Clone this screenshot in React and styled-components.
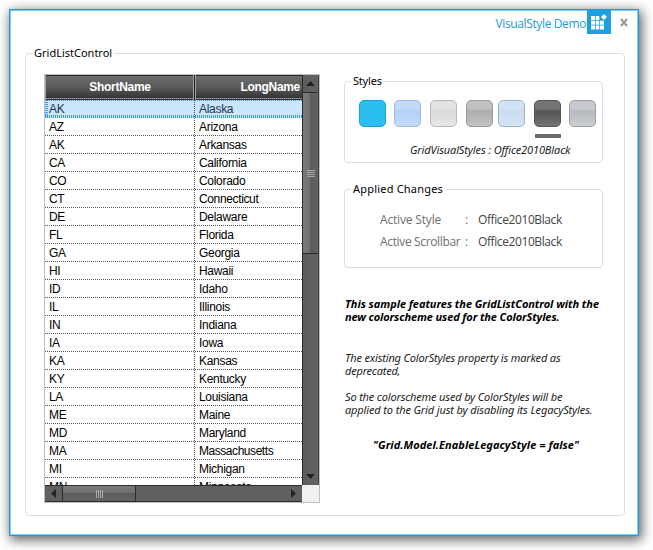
import React from "react";
import styled, { createGlobalStyle, css } from "styled-components";

const Global = createGlobalStyle`
  * { box-sizing: border-box; }
  body { margin: 0; background: #fff; overflow: hidden; }
`;

const ui = '"Noto Sans", "Open Sans", sans-serif';
const grid = '"Liberation Sans", Arial, sans-serif';

const Desktop = styled.div`
  width: 653px;
  height: 550px;
  padding: 9px 14px 14px 9px;
  background: #fff;
  font-family: ${ui};
  font-size: 11px;
  color: #000;
  overflow: hidden;
`;

const Window = styled.div`
  width: 630px;
  height: 527px;
  background: #fff;
  border: 1px solid #1e9bd7;
  box-shadow: inset 0 0 0 1px #86cdf0, 2px 3px 11px 1px rgba(0, 0, 0, 0.62);
  display: flex;
  flex-direction: column;
`;

const TitleBar = styled.header`
  height: 36px;
  display: flex;
  justify-content: flex-end;
  align-items: flex-start;
  padding-right: 10px;
`;

const Title = styled.span`
  font-family: "Open Sans", sans-serif;
  font-size: 12px;
  line-height: 16px;
  margin: 6px 1px 0 0;
  color: #1e9bd7;
  white-space: nowrap;
  letter-spacing: -0.38px;
`;

const AppIcon = styled.svg`
  width: 24px;
  height: 24px;
  display: block;
`;

const CloseButton = styled.button`
  border: 0;
  padding: 0;
  margin: 8px 0 0 9px;
  background: none;
  width: 8px;
  height: 9px;
  svg { display: block; }
`;

const Group = styled.fieldset`
  margin: 0;
  min-width: 0;
  padding: 0;
  border: 1px solid #d5dfe5;
  border-radius: 4px;
  width: ${(p) => p.$w}px;
  height: ${(p) => p.$h}px;
`;

const Legend = styled.legend`
  margin-left: 6px;
  padding: 0 2px;
  height: 14px;
  line-height: 14px;
  white-space: nowrap;
  letter-spacing: ${(p) => p.$ls || 0}px;
`;

const MainGroup = styled(Group)`
  margin: 0 0 0 15px;
`;

const Columns = styled.div`
  display: flex;
  padding: 14px 0 0 18px;
  gap: 24px;
`;

const GridFrame = styled.div`
  width: 276px;
  height: 429px;
  border: 1px solid #bfbfbf;
  display: grid;
  grid-template-columns: 257px 17px;
  grid-template-rows: 410px 17px;
  font-family: ${grid};
  font-size: 12px;
`;

const GridView = styled.div`
  overflow: hidden;
`;

const HeaderRow = styled.div`
  display: grid;
  grid-template-columns: 150px 107px;
  height: 25px;
  background: linear-gradient(#262626 0 1px, #6b6b6b 1px, #5a5a5a 50%, #343434 23px, #8a8a8a 23px 24px, #303030 24px);
  color: #fff;
  font-weight: bold;
  line-height: 23px;
  letter-spacing: -0.3px;
`;

const HeaderCell = styled.div`
  text-align: ${(p) => (p.$end ? "right" : "center")};
  padding: 1px ${(p) => (p.$end ? 2 : 0)}px 0 0;
  border-left: 1px solid #a0a0a0;
  border-right: ${(p) => (p.$end ? "0" : "1px solid #1e1e1e")};
  box-shadow: ${(p) => (p.$end ? "none" : "inset -1px 0 #a0a0a0")};
`;

const dots = (c) => css`
  background-image: repeating-linear-gradient(90deg, ${c} 0 1px, transparent 1px 2px);
  background-size: 100% 1px;
  background-position: 0 100%;
  background-repeat: no-repeat;
`;

const Row = styled.div`
  height: 18px;
  display: grid;
  grid-template-columns: 150px 107px;
  line-height: 19px;
  ${dots("#555")}
  ${(p) =>
    p.$selected &&
    css`
      color: #1b3550;
      background-color: #cbe5fd;
      background-image: repeating-linear-gradient(90deg, #3d9bf2 0 1px, transparent 1px 2px),
        repeating-linear-gradient(90deg, #3d9bf2 0 1px, transparent 1px 2px),
        repeating-linear-gradient(#3d9bf2 0 1px, transparent 1px 2px);
      background-size: 100% 1px, 100% 3px, 3px 100%;
      background-position: 0 0, 0 100%, 0 0;
      background-repeat: no-repeat;
    `}
`;

const Cell = styled.div`
  padding-left: 4px;
  white-space: nowrap;
  letter-spacing: ${(p) => p.$ls ?? -0.3}px;
  background: ${(p) =>
    p.$edge ? "repeating-linear-gradient(#555 0 1px, transparent 1px 2px) 100% 0 / 1px 100% no-repeat" : "none"};
`;

const VScroll = styled.div`
  background: linear-gradient(90deg, #2b2b2b 0 1px, #5c5c5c 1px, #646464 100%);
  display: flex;
  flex-direction: column;
  align-items: stretch;
  border-right: 1px solid #404040;
`;

const HScroll = styled.div`
  background: linear-gradient(#2b2b2b 0 1px, #606060 1px 16px, #303030 16px);
  display: flex;
`;

const ArrowButton = styled.div`
  display: flex;
  align-items: center;
  justify-content: center;
  flex: 0 0 17px;
`;

const VThumb = styled.div`
  height: 162px;
  border: 1px solid #2b2b2b;
  border-right: 0;
  background: linear-gradient(90deg, #7a7a7a, #707070 45%, #5c5c5c 50%, #626262);
  display: flex;
  align-items: center;
  justify-content: center;
`;

const HThumb = styled.div`
  width: 74px;
  border: 1px solid #2b2b2b;
  background: linear-gradient(#7a7a7a, #707070 45%, #5c5c5c 50%, #646464);
  display: flex;
  align-items: center;
  justify-content: center;
`;

const Grip = styled.div`
  width: ${(p) => (p.$vertical ? 8 : 7)}px;
  height: ${(p) => (p.$vertical ? 7 : 8)}px;
  background: repeating-linear-gradient(${(p) => (p.$vertical ? "180deg" : "90deg")}, #aaa 0 1px, transparent 1px 2px);
`;

const Spacer = styled.div`
  flex: 1;
`;

const Corner = styled.div`
  background: #f0f0f0;
`;

const Side = styled.div`
  width: 260px;
`;

const StylesGroup = styled(Group)`
  margin-top: 0;
`;

const ChangesGroup = styled(Group)`
  margin-top: 19px;
`;

const Swatches = styled.div`
  display: grid;
  grid-template-columns: 35px 36px 36px 32px 36px 35px 27px;
  padding: 12px 0 0 14px;
`;

const Slot = styled.div`
  width: 27px;
  height: 38px;
`;

const Swatch = styled.div`
  width: 27px;
  height: 27px;
  border-radius: 5px;
  border: 1px solid ${(p) => p.$edge};
  background: linear-gradient(${(p) => p.$top} 0 8px, ${(p) => p.$mid} 10px, ${(p) => p.$low});
`;

const Marker = styled.div`
  width: 26px;
  height: 4px;
  margin: 7px 0 0 1px;
  background: #6b6b6b;
`;

const Caption = styled.div`
  margin: 4px 0 0 65px;
  line-height: 16px;
  font-style: italic;
  color: #222;
  white-space: nowrap;
  letter-spacing: ${(p) => p.$ls}px;
`;

const Facts = styled.dl`
  margin: 0;
  padding: 13px 0 0 35px;
  display: grid;
  grid-template-columns: 85px 13px auto;
  grid-auto-rows: 22px;
  line-height: 22px;
  white-space: nowrap;
  font-size: 12px;
  font-family: "Open Sans", sans-serif;
`;

const Term = styled.dt`
  color: #707070;
  letter-spacing: ${(p) => p.$ls || 0}px;
`;

const Value = styled.dd`
  margin: 0;
  color: #444;
  letter-spacing: -0.4px;
`;

const Para = styled.p`
  margin: ${(p) => p.$top}px 0 0 ${(p) => p.$indent || 0}px;
  font-style: italic;
  font-weight: ${(p) => (p.$bold ? 700 : 400)};
  color: ${(p) => (p.$bold ? "#000" : "#222")};
  line-height: 13px;
`;

const Line = styled.span`
  display: block;
  white-space: nowrap;
  letter-spacing: ${(p) => p.$ls || 0}px;
`;

const states = [
  ["AK", "Alaska"], ["AZ", "Arizona"], ["AK", "Arkansas"], ["CA", "California"],
  ["CO", "Colorado"], ["CT", "Connecticut", -0.36], ["DE", "Delaware"], ["FL", "Florida"],
  ["GA", "Georgia"], ["HI", "Hawaii"], ["ID", "Idaho"], ["IL", "Illinois"],
  ["IN", "Indiana"], ["IA", "Iowa"], ["KA", "Kansas", -0.3], ["KY", "Kentucky"],
  ["LA", "Louisiana"], ["ME", "Maine"], ["MD", "Maryland"], ["MA", "Massachusetts", -0.45],
  ["MI", "Michigan"], ["MN", "Minnesota"],
];

const swatches = [
  { top: "#2bbff0", mid: "#2bbff0", low: "#2bbff0", edge: "#1f9fcf" },
  { top: "#c3d9f8", mid: "#b3d0f7", low: "#c5dbfa", edge: "#9fb9dc" },
  { top: "#e2e2e2", mid: "#d9d9d9", low: "#e8e8e8", edge: "#b8b8b8" },
  { top: "#c0c0c0", mid: "#adadad", low: "#c4c4c4", edge: "#999" },
  { top: "#d3e3f4", mid: "#cadcf0", low: "#d6e5f5", edge: "#8fb8c2" },
  { top: "#747474", mid: "#535353", low: "#757575", edge: "#555", active: true },
  { top: "#c6c9cd", mid: "#b6babe", low: "#cacdd1", edge: "#999da1" },
];

const arrows = {
  up: "M4.500 0 L9 5 H0 Z",
  down: "M0 0 H9 L4.500 5 Z",
  left: "M5 0 V9 L0 4.500 Z",
  right: "M0 0 V9 L5 4.500 Z",
};

function Arrow({ dir }) {
  const vertical = dir === "up" || dir === "down";
  return (
    <ArrowButton>
      <svg width={vertical ? 9 : 5} height={vertical ? 5 : 9}>
        <path d={arrows[dir]} fill="#222" />
      </svg>
    </ArrowButton>
  );
}

export default function App() {
  return (
    <Desktop>
      <Global />
      <Window>
        <TitleBar>
          <Title>VisualStyle Demo</Title>
          <AppIcon viewBox="0 0 24 24">
            <rect width="24" height="24" fill="#1e9fe0" />
            <g fill="#fff">
              <path d="M4 6h4v4H4zM8.700 6h3.600v4H8.700zM4 10.800h4v4H4zM8.700 10.800h3.600v4H8.700zM13 10.800h4v4h-4zM4 15.600h4v4H4zM8.700 15.600h3.600v4H8.700zM13 15.600h4v4h-4z" />
              <path d="M17 4l3 3-3 3-3-3z" />
            </g>
          </AppIcon>
          <CloseButton aria-label="Close">
            <svg width="8" height="9" viewBox="0 0 8 9">
              <path d="M1 1L7 8M7 1L1 8" stroke="#999" strokeWidth="2.200" />
            </svg>
          </CloseButton>
        </TitleBar>
        <MainGroup $w={600} $h={470}>
          <Legend>GridListControl</Legend>
          <Columns>
            <GridFrame>
              <GridView>
                <HeaderRow>
                  <HeaderCell>ShortName</HeaderCell>
                  <HeaderCell $end>LongName</HeaderCell>
                </HeaderRow>
                {states.map(([short, long, spacing], i) => (
                  <Row key={long} $selected={i === 0}>
                    <Cell $edge>{short}</Cell>
                    <Cell $ls={spacing}>{long}</Cell>
                  </Row>
                ))}
              </GridView>
              <VScroll>
                <Arrow dir="up" />
                <VThumb><Grip $vertical /></VThumb>
                <Spacer />
                <Arrow dir="down" />
              </VScroll>
              <HScroll>
                <Arrow dir="left" />
                <HThumb><Grip /></HThumb>
                <Spacer />
                <Arrow dir="right" />
              </HScroll>
              <Corner />
            </GridFrame>
            <Side>
              <StylesGroup $w={259} $h={89}>
                <Legend $ls={-0.2}>Styles</Legend>
                <Swatches>
                  {swatches.map((s) => (
                    <Slot key={s.top}>
                      <Swatch $top={s.top} $mid={s.mid} $low={s.low} $edge={s.edge} />
                      {s.active && <Marker />}
                    </Slot>
                  ))}
                </Swatches>
                <Caption $ls={-0.13}>GridVisualStyles : Office2010Black</Caption>
              </StylesGroup>
              <ChangesGroup $w={259} $h={86}>
                <Legend $ls={0.2}>Applied Changes</Legend>
                <Facts>
                  <Term $ls={-0.17}>Active Style</Term>
                  <Term>:</Term>
                  <Value>Office2010Black</Value>
                  <Term $ls={-0.35}>Active Scrollbar</Term>
                  <Term>:</Term>
                  <Value>Office2010Black</Value>
                </Facts>
              </ChangesGroup>
              <Para $bold $top={29} $indent={1}>
                <Line $ls={-0.05}>This sample features the GridListControl with the</Line>
                <Line $ls={-0.12}>new colorscheme used for the ColorStyles.</Line>
              </Para>
              <Para $top={28} $indent={1}>
                <Line $ls={-0.17}>The existing ColorStyles property is marked as</Line>
                <Line $ls={-0.2}>deprecated,</Line>
              </Para>
              <Para $top={13} $indent={1}>
                <Line $ls={-0.16}>So the colorscheme used by ColorStyles will be</Line>
                <Line $ls={-0.13}>applied to the Grid just by disabling its LegacyStyles.</Line>
              </Para>
              <Para $bold $top={22} $indent={29}>
                <Line $ls={0.05}>"Grid.Model.EnableLegacyStyle = false"</Line>
              </Para>
            </Side>
          </Columns>
        </MainGroup>
      </Window>
    </Desktop>
  );
}
